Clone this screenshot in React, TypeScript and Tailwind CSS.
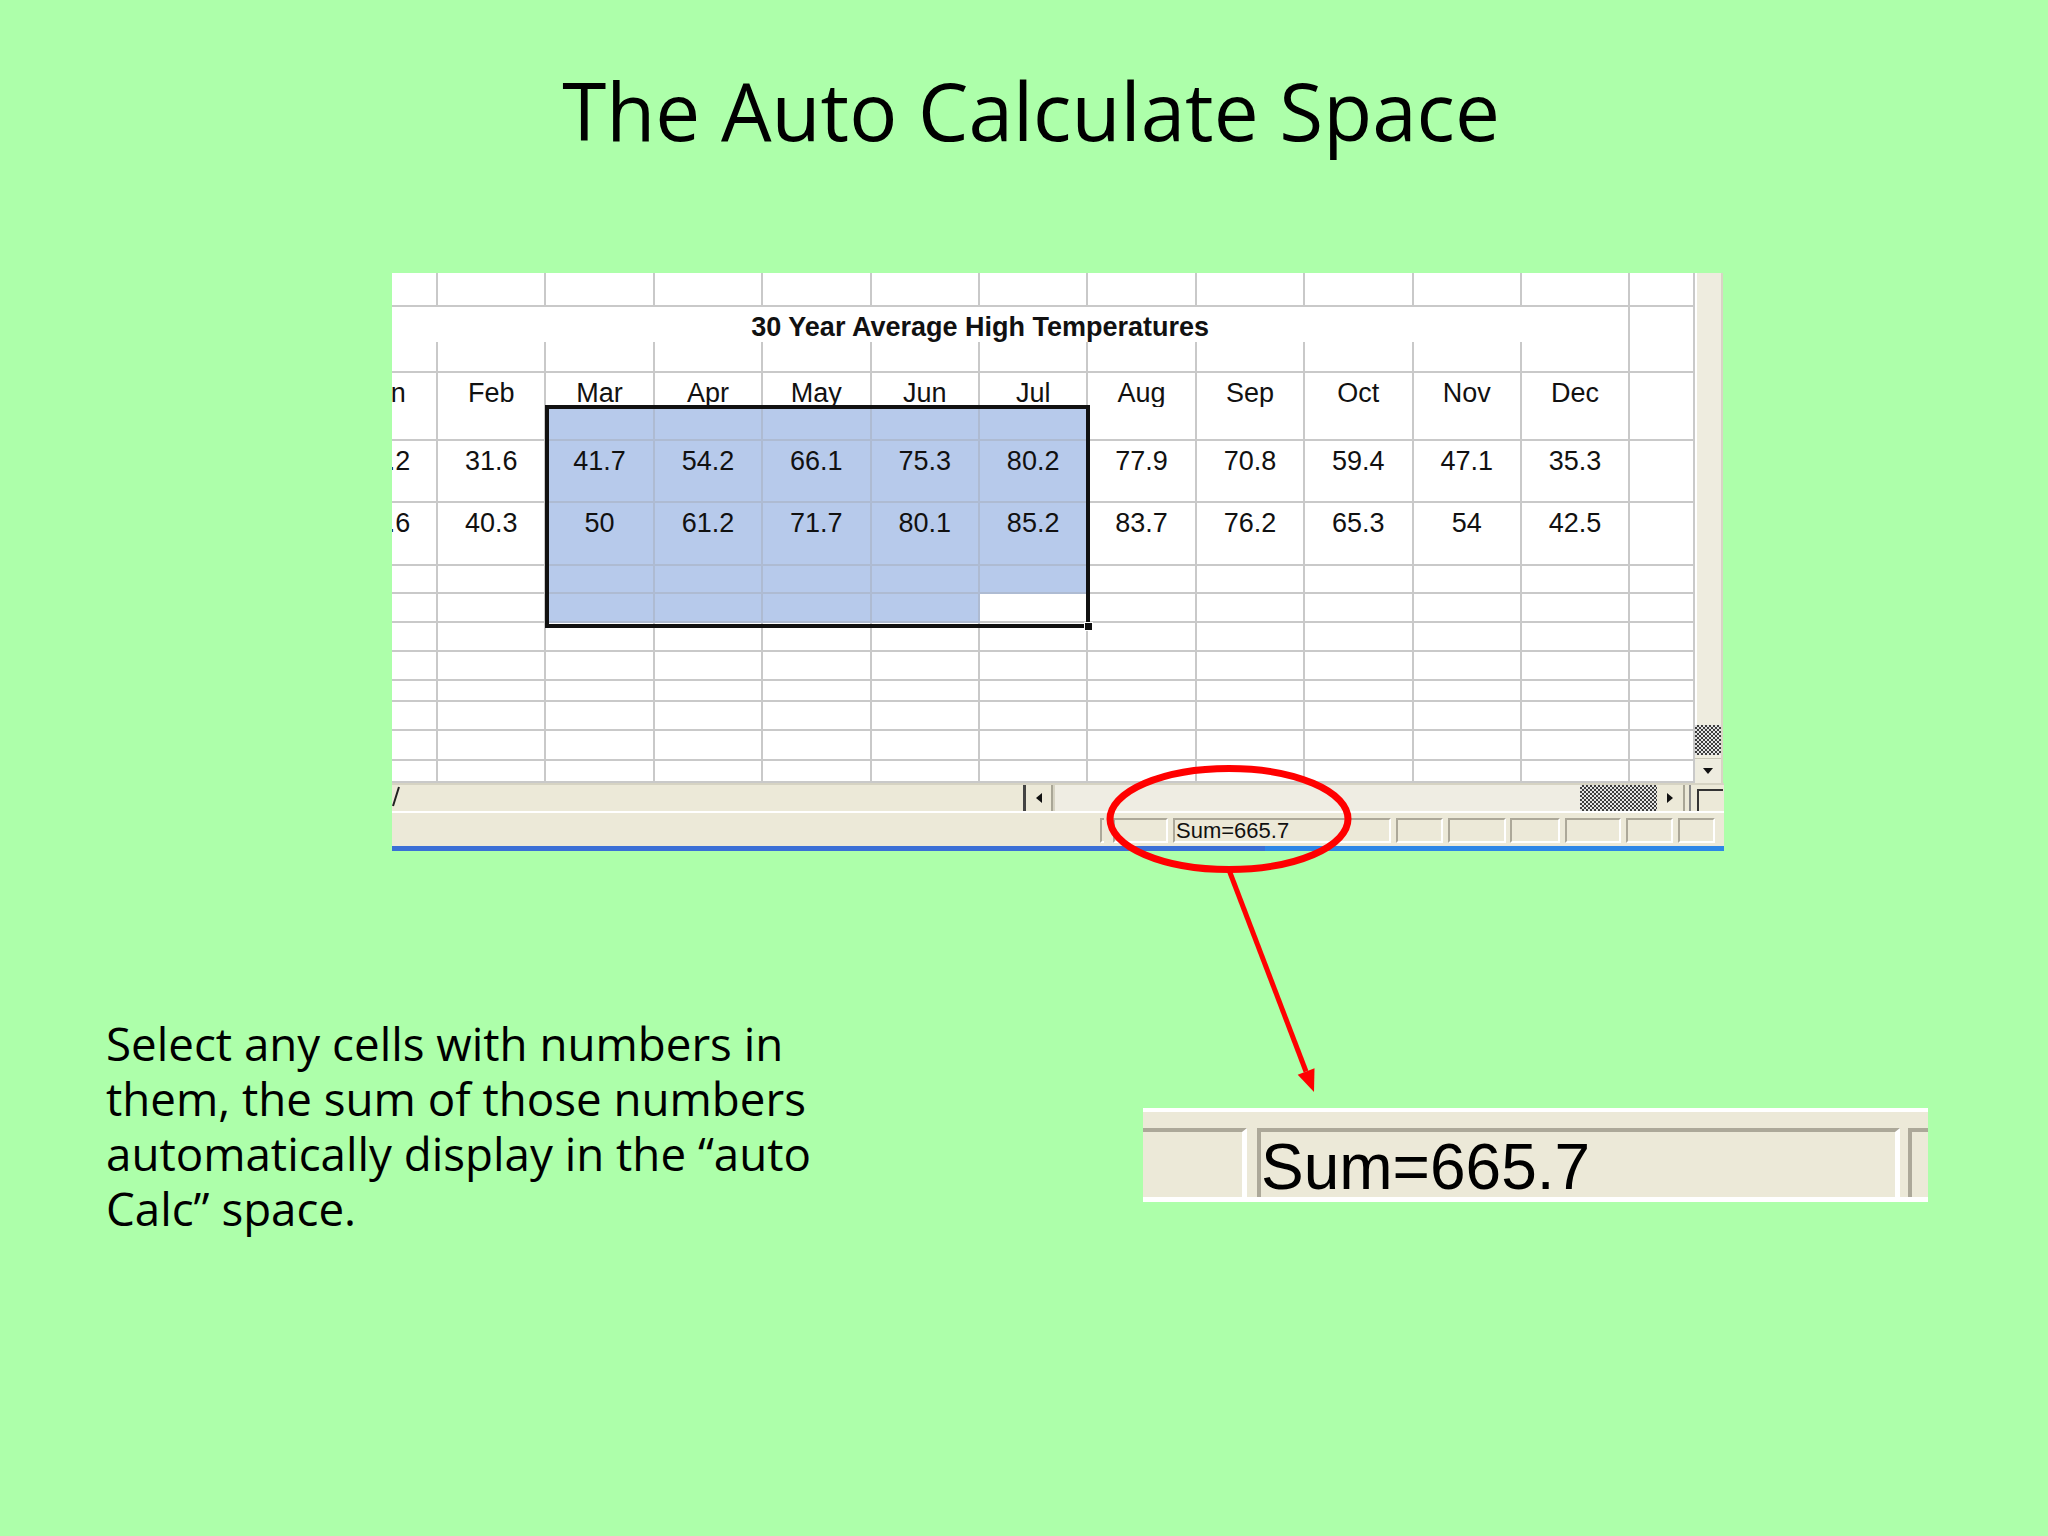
import React from 'react';

const months = ['Jan', 'Feb', 'Mar', 'Apr', 'May', 'Jun', 'Jul', 'Aug', 'Sep', 'Oct', 'Nov', 'Dec'];
const lows = ['29.2', '31.6', '41.7', '54.2', '66.1', '75.3', '80.2', '77.9', '70.8', '59.4', '47.1', '35.3'];
const highs = ['35.6', '40.3', '50', '61.2', '71.7', '80.1', '85.2', '83.7', '76.2', '65.3', '54', '42.5'];

type RowKind = 'blank' | 'title' | 'months' | 'lows' | 'highs';

const rows: { h: string; kind: RowKind }[] = [
  { h: 'h-[34px]', kind: 'blank' },
  { h: 'h-[35px]', kind: 'title' },
  { h: 'h-[31px]', kind: 'blank' },
  { h: 'h-[34px]', kind: 'months' },
  { h: 'h-[34px]', kind: 'blank' },
  { h: 'h-[34px]', kind: 'lows' },
  { h: 'h-[28px]', kind: 'blank' },
  { h: 'h-[35px]', kind: 'highs' },
  { h: 'h-[28px]', kind: 'blank' },
  { h: 'h-[28px]', kind: 'blank' },
  { h: 'h-[29px]', kind: 'blank' },
  { h: 'h-[29px]', kind: 'blank' },
  { h: 'h-[29px]', kind: 'blank' },
  { h: 'h-[21px]', kind: 'blank' },
  { h: 'h-[29px]', kind: 'blank' },
  { h: 'h-[30px]', kind: 'blank' },
  { h: 'h-[22px]', kind: 'blank' },
];

const isSelected = (r: number, c: number) => r >= 4 && r <= 10 && c >= 2 && c <= 6 && !(r === 10 && c === 6);

const Cell = ({ text, selected }: { text?: string; selected?: boolean }) => (
  <div
    className={`flex items-center justify-center border-r-2 border-b-2 whitespace-nowrap ${
      selected ? 'bg-[#b7caeb] border-[#aebbd2]' : 'bg-white border-[#c9c9c9]'
    }`}
  >
    {text}
  </div>
);

const Checker = ({ className }: { className: string }) => (
  <div
    className={`bg-[repeating-conic-gradient(#3c3c3c_0%_25%,#e4e4e4_0%_50%)] bg-[length:4px_4px] ${className}`}
  />
);

const Sunken = ({ className, children }: { className: string; children?: React.ReactNode }) => (
  <div
    className={`h-[25px] border-2 border-t-[#aca899] border-l-[#aca899] border-b-white border-r-white flex items-center ${className}`}
  >
    {children}
  </div>
);

const Sheet = () => (
  <div className="ml-[392px] mt-[123px] w-[1332px] font-['Liberation_Sans',Arial,sans-serif] text-[#111]">
    {/* grid + vertical scrollbar */}
    <div className="flex">
      <div className="w-[1303px] overflow-hidden">
        <div className="relative -ml-[60px] text-[27px]">
          {rows.map((row, r) => (
            <div key={r} className={`grid grid-cols-[106px_repeat(11,108.4px)_65px] ${row.h}`}>
              {row.kind === 'title' ? (
                <>
                  <div className="col-span-12 flex items-center justify-center border-r-2 border-b-2 border-[#c9c9c9] bg-white text-[27px] font-bold">
                    30 Year Average High Temperatures
                  </div>
                  <Cell />
                </>
              ) : (
                <>
                  {months.map((m, c) => {
                    const text =
                      row.kind === 'months' ? m : row.kind === 'lows' ? lows[c] : row.kind === 'highs' ? highs[c] : '';
                    return <Cell key={c} text={text} selected={isSelected(r, c)} />;
                  })}
                  <Cell />
                </>
              )}
            </div>
          ))}
          {/* selection outline */}
          <div className="absolute left-[213px] top-[132px] w-[545px] h-[223px] border-[4px] border-[#111]">
            <div className="absolute -right-[7px] -bottom-[7px] w-[9px] h-[9px] bg-[#111] border border-white" />
          </div>
        </div>
      </div>
      <div className="w-[28px] flex flex-col bg-[#eeecdf] border-r-2 border-[#d8d4c4]">
        <div className="flex-1 border-l-2 border-white" />
        <Checker className="h-[30px]" />
        <div className="h-[3px]" />
        <div className="h-[25px] flex items-center justify-center border-t border-[#c9c6b6]">
          <svg width="12" height="8" viewBox="0 0 12 8">
            <polygon points="1,1 11,1 6,7" fill="#111" />
          </svg>
        </div>
      </div>
    </div>

    {/* sheet tabs + horizontal scrollbar */}
    <div className="h-[28px] flex bg-[#ece9d8] border-t-2 border-[#d6d3c3]">
      <div className="w-[631px] flex items-start">
        <svg width="10" height="22" viewBox="0 0 10 22" className="mt-[1px]">
          <line x1="7" y1="1" x2="1" y2="20" stroke="#222" strokeWidth="2" />
        </svg>
      </div>
      <div className="w-[3px] bg-[#444]" />
      <div className="w-[27px] flex items-center justify-center border-r-2 border-[#a9a696] bg-[#ece9d8]">
        <svg width="8" height="12" viewBox="0 0 8 12">
          <polygon points="7,1 7,11 1,6" fill="#111" />
        </svg>
      </div>
      <div className="w-[527px] bg-[#efede3] border-l-2 border-[#d6d3c3]" />
      <Checker className="w-[77px]" />
      <div className="w-[28px] flex items-center justify-center border-r-2 border-[#a9a696]">
        <svg width="8" height="12" viewBox="0 0 8 12">
          <polygon points="1,1 1,11 7,6" fill="#111" />
        </svg>
      </div>
      <div className="w-[10px] flex justify-center">
        <div className="w-[2px] bg-[#888]" />
      </div>
      <div className="w-[28px] pl-[2px] pt-[4px]">
        <div className="h-full border-l-2 border-t-2 border-[#333]" />
      </div>
    </div>

    {/* status bar */}
    <div className="h-[35px] flex items-center bg-[#ece9d8] border-t-2 border-white pt-[2px]">
      <div className="w-[708px]" />
      <Sunken className="w-[4px] border-r-0" />
      <Sunken className="ml-[9px] w-[55px]" />
      <Sunken className="ml-[5px] w-[218px] text-[22px] leading-none">
        <span className="pl-[1px]">Sum=665.7</span>
      </Sunken>
      <Sunken className="ml-[5px] w-[47px]" />
      <Sunken className="ml-[5px] w-[58px]" />
      <Sunken className="ml-[4px] w-[50px]" />
      <Sunken className="ml-[5px] w-[56px]" />
      <Sunken className="ml-[5px] w-[47px]" />
      <Sunken className="ml-[5px] w-[37px]" />
    </div>
    <div className="h-[5px] flex">
      <div className="w-[873px] bg-[#3a6fd6]" />
      <div className="flex-1 bg-[#2d86e6]" />
    </div>
  </div>
);

const SumZoom = () => (
  <div className="mt-[92px] w-[785px] h-[94px] bg-[#ece9d8] border-t-4 border-b-[5px] border-white flex items-start font-['Liberation_Sans',Arial,sans-serif]">
    <div className="mt-[16px] w-[104px] h-[69px] border-t-4 border-r-[5px] border-t-[#aca899] border-r-white" />
    <div className="mt-[16px] ml-[10px] w-[643px] h-[69px] border-t-4 border-l-4 border-r-[5px] border-t-[#aca899] border-l-[#aca899] border-r-white pt-[3px]">
      <div className="text-[64px] leading-none text-black">Sum=665.7</div>
    </div>
    <div className="mt-[16px] ml-[8px] w-[20px] h-[69px] border-t-4 border-l-4 border-[#aca899]" />
  </div>
);

export default function App() {
  return (
    <div className="relative w-[2048px] h-[1536px] overflow-hidden bg-[#adffaa] font-['Open_Sans',sans-serif] text-black">
      <h1 className="pt-[70px] pl-[14px] text-center text-[80px] leading-none font-normal">The Auto Calculate Space</h1>

      <Sheet />

      <div className="flex mt-[165px]">
        <p className="ml-[106px] w-[1037px] text-[45.7px] leading-[55px]">
          Select any cells with numbers in
          <br />
          them, the sum of those numbers
          <br />
          automatically display in the “auto
          <br />
          Calc” space.
        </p>
        <SumZoom />
      </div>

      {/* red annotation over the screenshot */}
      <svg className="absolute inset-0 pointer-events-none" width="2048" height="1536" viewBox="0 0 2048 1536">
        <ellipse cx="1229" cy="819" rx="119" ry="50.5" fill="none" stroke="#ff0000" strokeWidth="7" />
        <line x1="1229" y1="870" x2="1306" y2="1071.5" stroke="#ff0000" strokeWidth="5" />
        <polygon points="1314,1092 1297.7,1074.7 1314.5,1068.3" fill="#ff0000" />
      </svg>
    </div>
  );
}
